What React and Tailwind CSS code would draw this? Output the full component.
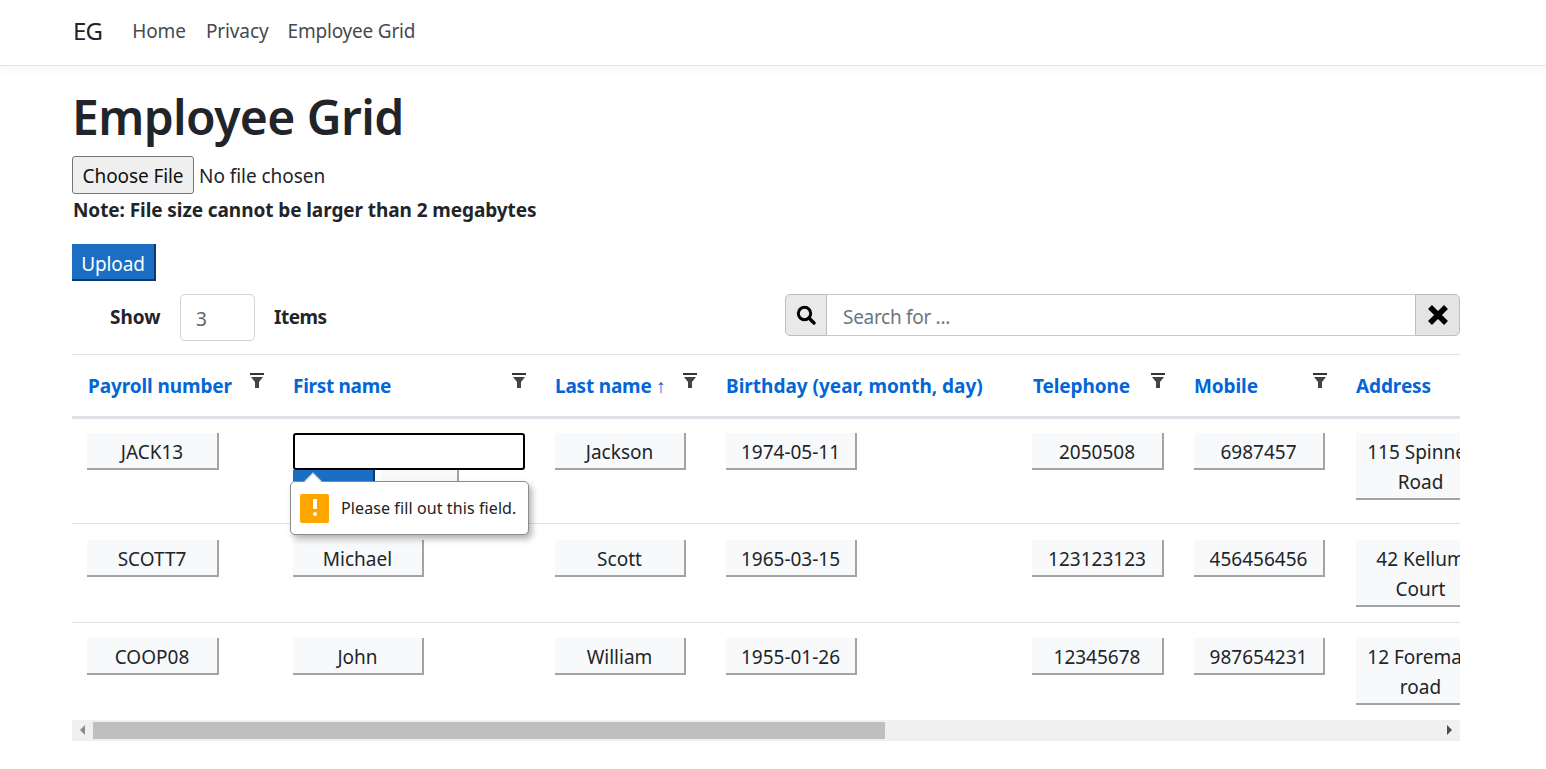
const rows = [
  { id: "JACK13", first: null, last: "Jackson", birth: "1974-05-11", tel: "2050508", mob: "6987457", addr: "115 Spinner Road", h: "h-[106px]", pad: "pt-[14px]" },
  { id: "SCOTT7", first: "Michael", last: "Scott", birth: "1965-03-15", tel: "123123123", mob: "456456456", addr: "42 Kellum Court", h: "h-[99px]", pad: "pt-[16px]" },
  { id: "COOP08", first: "John", last: "William", birth: "1955-01-26", tel: "12345678", mob: "987654231", addr: "12 Foreman road", h: "h-[97px]", pad: "pt-[15px]" },
];

const headers = [
  { label: "Payroll number", filter: true, pad: "pl-4", track: "tracking-[-0.1px]" },
  { label: "First name", filter: true, pad: "pl-[15px]", track: "tracking-[-0.3px]" },
  { label: "Last name ↑", filter: true, pad: "pl-[15px]", track: "tracking-[-0.2px]" },
  { label: "Birthday (year, month, day)", pad: "pl-[15px]", track: "tracking-[0px]" },
  { label: "Telephone", filter: true, pad: "pl-4", track: "tracking-[-0.1px]" },
  { label: "Mobile", filter: true, pad: "pl-[15px]", track: "tracking-[-0.1px]" },
  { label: "Address", pad: "pl-[15px]", track: "tracking-[-0.1px]" },
];

function FilterIcon() {
  return (
    <svg width="14" height="16" viewBox="0 0 14 16" className="mt-[18px] shrink-0">
      <rect x="0" y="0" width="14" height="2" fill="#333" />
      <path d="M1 4h12L9 9v6H5V9z" fill="#444" />
    </svg>
  );
}

function CellButton({ children, wide }) {
  return (
    <button className={`${wide ? "w-[132px]" : "w-[131px]"} min-h-[37px] border-r-2 border-b-2 border-[#a3a3a3] bg-[#f8f9fa] px-2 pt-[4px] pb-[1px] text-center text-[19px] leading-[30px] text-[#212529]`}>
      {children}
    </button>
  );
}

function Tooltip() {
  return (
    <div className="absolute left-[-3px] top-[48px] z-10 flex h-[54px] w-[239px] items-center rounded-[5px] border border-[#8c8c8c] bg-white pl-[9px] shadow-[3px_4px_6px_rgba(0,0,0,0.3)]">
      <div className="absolute left-[16px] top-[-7px] h-3 w-3 rotate-45 border-l border-t border-[#c8c8c8] bg-white" />
      <div className="flex h-[29px] w-[29px] items-center justify-center rounded-[2px] bg-[#ffa500]">
        <svg width="6" height="18" viewBox="0 0 6 18">
          <rect x="1" y="0" width="4" height="10" fill="#fff" />
          <rect x="1" y="13" width="4" height="4" rx="2" fill="#fff" />
        </svg>
      </div>
      <span className="ml-[12px] whitespace-nowrap text-[16px] tracking-[0.1px] text-[#222]">Please fill out this field.</span>
    </div>
  );
}

function EditCell() {
  return (
    <div className="relative w-[232px]">
      <input className="block h-[37px] w-full rounded-[3px] border-2 border-black bg-white outline-none" />
      <div className="flex h-[37px]">
        <div className="w-[82px] border-r-2 border-[#0b3a72] bg-[#1b6ec2]" />
        <div className="ml-[6px] w-[78px] border-r-2 border-[#a3a3a3] bg-[#f8f9fa]" />
      </div>
      <Tooltip />
    </div>
  );
}

export default function App() {
  return (
    <div className="min-h-[769px] bg-white font-['Noto_Sans',sans-serif] text-[19px] text-[#212529]">
      <nav className="flex h-[66px] items-center border-b border-[#e5e5e5] bg-white pr-[73px] pb-[3px] pl-[73px] shadow-[0_4px_10px_rgba(0,0,0,0.04)]">
        <span className="mr-[30px] text-[24px] tracking-[-0.8px] text-[#212529]">EG</span>
        <a className="mr-[20px] tracking-[-0.1px] text-[#454b50]">Home</a>
        <a className="mr-[19px] tracking-[-0.1px] text-[#454b50]">Privacy</a>
        <a className="tracking-[-0.2px] text-[#454b50]">Employee Grid</a>
      </nav>

      <main className="pr-[86px] pl-[72px]">
        <h1 className="mt-[18px] text-[48px] font-semibold leading-[66px] tracking-[-0.6px] text-[#212529]">Employee Grid</h1>
        <div className="mt-[6px] flex items-center">
          <button className="h-[38px] w-[122px] rounded-[3px] border border-[#767676] bg-[#efefef] pt-[2px] text-[19px] tracking-[-0.1px] text-[#111]">Choose File</button>
          <span className="ml-[5px] pt-[2px] tracking-[-0.05px]">No file chosen</span>
        </div>
        <p className="mt-[2px] ml-[1px] text-[19px] font-bold leading-[28px] tracking-[-0.08px]">Note: File size cannot be larger than 2 megabytes</p>
        <button className="mt-[20px] block h-[37px] w-[84px] border-r-2 border-b-2 border-[#0b3a72] bg-[#1b6ec2] pt-[5px] text-[19px] tracking-[-0.1px] text-white">Upload</button>

        <div className="mt-[13px] flex items-start justify-between">
          <div className="flex items-center pl-[38px]">
            <span className="w-[51px] text-[19px] font-bold">Show</span>
            <input readOnly value="3" className="ml-[19px] h-[47px] w-[75px] rounded-[5px] border border-[#ced4da] pt-[2px] pl-[15px] text-[19px] text-[#5c6369] outline-none" />
            <span className="ml-[19px] text-[19px] font-bold tracking-[-0.5px]">Items</span>
          </div>
          <div className="flex h-[42px] w-[675px]">
            <div className="flex w-[42px] items-center justify-center rounded-l-[5px] border border-[#bdbdbd] bg-[#e9e9e9]">
              <svg width="20" height="20" viewBox="0 0 20 20" fill="none" stroke="#000" strokeWidth="3">
                <circle cx="8.5" cy="8.5" r="6.2" />
                <path d="M13 13l5 5" strokeLinecap="round" strokeWidth="3.4" />
              </svg>
            </div>
            <input placeholder="Search for ..." className="min-w-0 flex-1 border-y border-[#c8c8c8] pt-[4px] pl-4 text-[19px] tracking-[-0.3px] outline-none placeholder:text-[#6c757d]" />
            <div className="flex w-[45px] items-center justify-center rounded-r-[5px] border border-[#bdbdbd] bg-[#e4e4e4]">
              <svg width="22" height="22" viewBox="0 0 22 22" stroke="#000" strokeWidth="5.5">
                <path d="M3 3l16 16M19 3L3 19" />
              </svg>
            </div>
          </div>
        </div>

        <div className="mt-[13px] overflow-hidden">
          <table className="w-[1500px] table-fixed border-collapse">
            <colgroup>
              <col className="w-[206px]" />
              <col className="w-[262px]" />
              <col className="w-[171px]" />
              <col className="w-[306px]" />
              <col className="w-[162px]" />
              <col className="w-[162px]" />
              <col className="w-[231px]" />
            </colgroup>
            <thead>
              <tr className="h-[63px] border-t border-b-[3px] border-t-[#dee2e6] border-b-[#dee2e6]">
                {headers.map((h) => (
                  <th key={h.label} className="p-0 text-left align-top">
                    <div className={`flex justify-between pr-[14px] ${h.pad}`}>
                      <a className={`mt-[16px] whitespace-nowrap text-[19px] font-bold leading-[30px] ${h.track} text-[#0366d6]`}>{h.label}</a>
                      {h.filter && <FilterIcon />}
                    </div>
                  </th>
                ))}
              </tr>
            </thead>
            <tbody>
              {rows.map((r, i) => (
                <tr key={r.id} className={`${r.h} ${i < 2 ? "border-b border-[#dee2e6]" : ""}`}>
                  {[r.id, r.first, r.last, r.birth, r.tel, r.mob, r.addr].map((v, j) => (
                    <td key={j} className={`${r.pad} pl-[15px] align-top`}>
                      {v === null ? <EditCell /> : <CellButton wide={j === 0 || j === 4}>{v}</CellButton>}
                    </td>
                  ))}
                </tr>
              ))}
            </tbody>
          </table>
        </div>

        <div className="flex h-[21px] items-center bg-[#f0f0f0]">
          <div className="flex w-[21px] justify-center">
            <div className="h-0 w-0 border-y-[5px] border-r-[5px] border-y-transparent border-r-[#8a8a8a]" />
          </div>
          <div className="h-[17px] w-[792px] bg-[#bfbfbf]" />
          <div className="flex flex-1 justify-end pr-[8px]">
            <div className="h-0 w-0 border-y-[5px] border-l-[5px] border-y-transparent border-l-[#4d4d4d]" />
          </div>
        </div>
      </main>
    </div>
  );
}
